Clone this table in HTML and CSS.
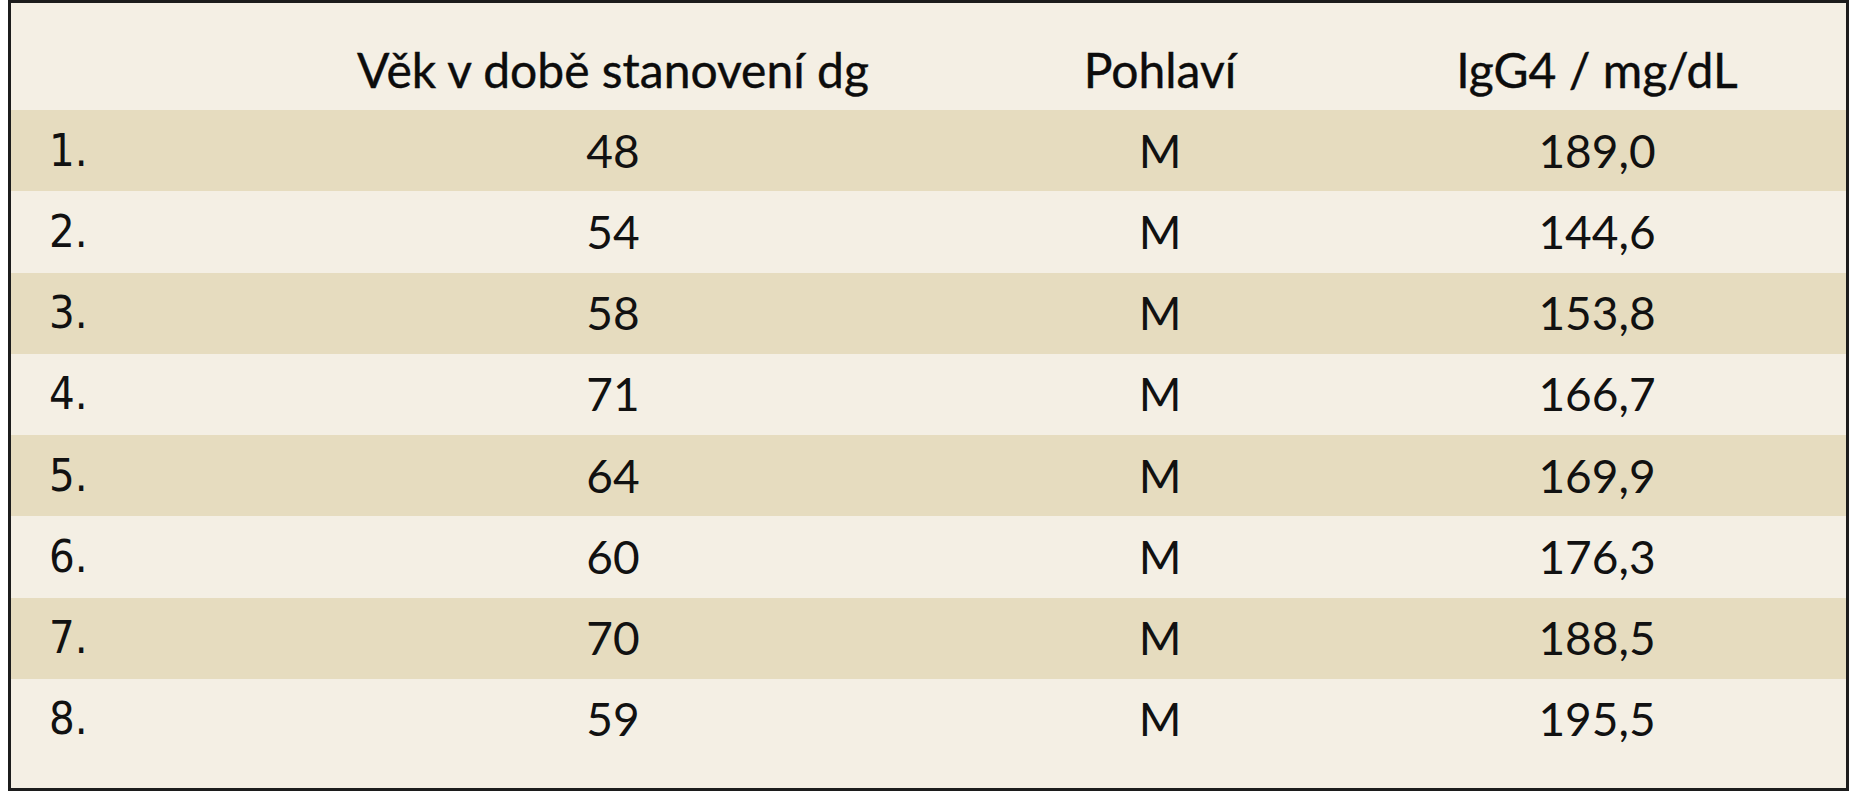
FILE: index.html
```html
<!DOCTYPE html>
<html lang="cs">
<head>
<meta charset="utf-8">
<title>IgG4 tabulka</title>
<link rel="stylesheet" href="styles.css">
</head>
<body>
<div class="frame">
  <div class="row head">
    <div class="cell idx"></div>
    <div class="cell">Věk v době stanovení dg</div>
    <div class="cell">Pohlaví</div>
    <div class="cell">IgG4 / mg/dL</div>
  </div>
  <div class="row dark"><div class="cell idx">1.</div><div class="cell">48</div><div class="cell">M</div><div class="cell">189,0</div></div>
  <div class="row"><div class="cell idx">2.</div><div class="cell">54</div><div class="cell">M</div><div class="cell">144,6</div></div>
  <div class="row dark"><div class="cell idx">3.</div><div class="cell">58</div><div class="cell">M</div><div class="cell">153,8</div></div>
  <div class="row"><div class="cell idx">4.</div><div class="cell">71</div><div class="cell">M</div><div class="cell">166,7</div></div>
  <div class="row dark"><div class="cell idx">5.</div><div class="cell">64</div><div class="cell">M</div><div class="cell">169,9</div></div>
  <div class="row"><div class="cell idx">6.</div><div class="cell">60</div><div class="cell">M</div><div class="cell">176,3</div></div>
  <div class="row dark"><div class="cell idx">7.</div><div class="cell">70</div><div class="cell">M</div><div class="cell">188,5</div></div>
  <div class="row"><div class="cell idx">8.</div><div class="cell">59</div><div class="cell">M</div><div class="cell">195,5</div></div>
</div>
</body>
</html>
```
FILE: styles.css
```css
html, body {
  margin: 0;
  padding: 0;
  background: #ffffff;
}

body {
  padding-left: 8px;
}

.frame {
  box-sizing: border-box;
  width: 1841px;
  height: 791px;
  border: 3px solid #1c1c1c;
  background: #f4efe4;
  padding-bottom: 28px;
  display: flex;
  flex-direction: column;
  font-family: "Lato", "Liberation Sans", sans-serif;
  font-size: 46px;
  color: #111111;
}

.row {
  display: grid;
  grid-template-columns: 319px 566px 528px 346px;
  padding-right: 76px;
  height: 81.25px;
  align-items: center;
  line-height: 46px;
}

.row.head {
  height: 107px;
  align-items: end;
  padding-bottom: 17px;
  box-sizing: border-box;
  font-size: 48px;
  color: #0c0c0c;
  -webkit-text-stroke: 0.4px #0c0c0c;
}

.row.dark {
  background: #e6dcbf;
}

.cell {
  text-align: center;
  white-space: nowrap;
}

.cell.idx {
  text-align: left;
  padding-left: 38px;
  font-family: "DejaVu Sans Condensed", "DejaVu Sans", sans-serif;
  font-stretch: condensed;
  font-size: 45px;
}
```
